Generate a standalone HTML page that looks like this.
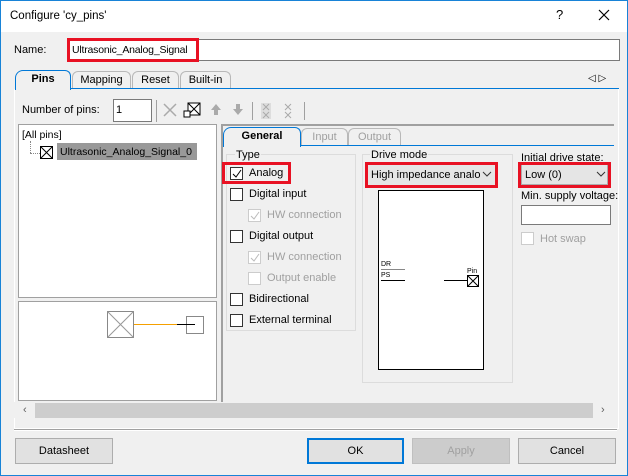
<!DOCTYPE html>
<html><head><meta charset="utf-8"><style>
*{box-sizing:border-box;margin:0;padding:0}
body{width:628px;height:476px;overflow:hidden;font-family:"Liberation Sans",sans-serif;font-size:11px;color:#000;background:#f0f0f0;position:relative}
.a{position:absolute}
.t{position:absolute;white-space:nowrap;line-height:14px}
.cb{position:absolute;width:13px;height:13px;border:1px solid #333;background:#fff}
.cbd{position:absolute;width:13px;height:13px;border:1px solid #ccc;background:#fff}
.red{position:absolute;border:3px solid #e81123}
.btn{position:absolute;height:26px;border:1px solid #adadad;background:#e1e1e1;text-align:center;line-height:24px}
.g{color:#a0a0a0}
.tab{position:absolute;height:18px;border:1px solid #b8b8b8;border-bottom:none;border-radius:6px 6px 0 0;background:#f0f0f0;text-align:center;line-height:17px}
</style></head><body>
<div class="a" style="left:0;top:0;width:628px;height:476px;border:1px solid #1883d7;border-top:none"></div>
<div class="a" style="left:0;top:0;width:628px;height:32px;background:#fff;border:1px solid #1883d7;border-bottom:none"></div>
<div class="t" style="left:10px;top:9px;font-size:11.5px">Configure 'cy_pins'</div>
<div class="t" style="left:556px;top:8px;font-size:13px">?</div>
<svg class="a" style="left:598px;top:9px" width="12" height="12"><path d="M1 1L11 11M11 1L1 11" stroke="#000" stroke-width="1.2"/></svg>

<div class="t" style="left:14px;top:43px">Name:</div>
<div class="a" style="left:68px;top:39px;width:552px;height:22px;background:#fff;border:1px solid #7a7a7a"></div>
<div class="t" style="left:72px;top:43px;font-size:10.5px;letter-spacing:-0.2px">Ultrasonic_Analog_Signal</div>
<div class="red" style="left:67px;top:38px;width:132px;height:24px"></div>

<div class="tab" style="left:72px;top:71px;width:59px">Mapping</div>
<div class="tab" style="left:132px;top:71px;width:47px">Reset</div>
<div class="tab" style="left:180px;top:71px;width:51px">Built-in</div>
<div class="a" style="left:15px;top:88px;width:604px;height:1px;background:#0078d7"></div>
<div class="tab" style="left:15px;top:70px;width:56px;height:20px;border-color:#0078d7;font-weight:bold;border-radius:8px 6px 0 0">Pins</div>
<div class="t" style="left:588px;top:72px;font-size:10px">◁ ▷</div>
<div class="a" style="left:14px;top:89px;width:605px;height:340px;border:1px solid #fff;border-top:none"></div>

<div class="t" style="left:22px;top:103px">Number of pins:</div>
<div class="a" style="left:113px;top:99px;width:39px;height:23px;background:#fff;border:1px solid #7a7a7a"></div>
<div class="t" style="left:116px;top:103px">1</div>
<div class="a" style="left:156px;top:100px;width:1px;height:22px;background:#a0a0a0"></div>
<svg class="a" style="left:163px;top:102px" width="150" height="18">
<path d="M1 2L13 14M13 2L1 14" stroke="#aaa" stroke-width="1.5"/>
<rect x="25" y="1" width="12" height="12" fill="#fff" stroke="#000"/><path d="M25 1L37 13M37 1L25 13" stroke="#000"/>
<rect x="21" y="9" width="6" height="6" fill="#fff" stroke="#000"/>
<path d="M53 2L48 8H51V13H55V8H58Z" fill="#aaa"/><path d="M75 13L70 7H73V2H77V7H80Z" fill="#aaa"/>
<rect x="89" y="-2" width="1" height="22" fill="#a0a0a0"/>
<rect x="98" y="1" width="10" height="16" fill="#ddd"/><path d="M100 2L106 8M106 2L100 8M100 10L106 16M106 10L100 16" stroke="#aaa"/>
<path d="M122 2L128 8M128 2L122 8M122 10L128 16M128 10L122 16" stroke="#aaa"/>
<rect x="141" y="-2" width="1" height="22" fill="#a0a0a0"/></svg>

<div class="a" style="left:18px;top:124px;width:199px;height:174px;background:#fff;border:1px solid #a0a0a0"></div>
<div class="t" style="left:22px;top:128px;font-size:10.5px">[All pins]</div>
<div class="a" style="left:30px;top:141px;width:1px;height:12px;border-left:1px dotted #888"></div>
<div class="a" style="left:30px;top:153px;width:10px;height:1px;border-top:1px dotted #888"></div>
<svg class="a" style="left:40px;top:146px" width="13" height="13"><rect x=".5" y=".5" width="12" height="12" fill="#fff" stroke="#000"/><path d="M.5 .5L12.5 12.5M12.5 .5L.5 12.5" stroke="#000"/></svg>
<div class="a" style="left:57px;top:143px;width:140px;height:17px;background:#999"></div>
<div class="t" style="left:60px;top:145px;font-size:10.5px">Ultrasonic_Analog_Signal_0</div>

<div class="a" style="left:18px;top:301px;width:199px;height:100px;background:#fff;border:1px solid #a0a0a0"></div>
<svg class="a" style="left:100px;top:305px" width="110" height="40">
<rect x="7.5" y="6.5" width="26" height="26" fill="#fff" stroke="#888"/><path d="M7.5 6.5L33.5 32.5M33.5 6.5L7.5 32.5" stroke="#999"/>
<path d="M34 19.5H77" stroke="#f5a000"/><rect x="86.5" y="11.5" width="17" height="17" fill="#fff" stroke="#888"/><path d="M77 19.5H95" stroke="#000"/></svg>

<div class="a" style="left:221px;top:124px;width:393px;height:278px;border-left:2px solid #a0a0a0;border-top:2px solid #a0a0a0"></div>
<div class="tab" style="left:301px;top:128px;width:47px" ><span class="g">Input</span></div>
<div class="tab" style="left:348px;top:128px;width:53px"><span class="g">Output</span></div>
<div class="a" style="left:223px;top:145px;width:391px;height:1px;background:#0078d7"></div>
<div class="tab" style="left:223px;top:127px;width:78px;height:20px;border-color:#0078d7;font-weight:bold;border-radius:8px 6px 0 0">General</div>

<div class="a" style="left:226px;top:154px;width:130px;height:177px;border:1px solid #dcdcdc"></div>
<div class="t" style="left:235px;top:148px;background:#f0f0f0;padding:0 1px">Type</div>
<div class="cb" style="left:230px;top:167px"></div><svg class="a" style="left:231px;top:168px" width="12" height="12"><path d="M2 6L5 9L10 2" stroke="#000" fill="none"/></svg>
<div class="t" style="left:249px;top:166px">Analog</div>
<div class="red" style="left:222px;top:162px;width:69px;height:22px"></div>
<div class="cb" style="left:230px;top:188px"></div><div class="t" style="left:249px;top:187px">Digital input</div>
<div class="cbd" style="left:248px;top:209px"></div><svg class="a" style="left:249px;top:210px" width="12" height="12"><path d="M2 6L5 9L10 2" stroke="#bbb" fill="none"/></svg><div class="t g" style="left:267px;top:208px">HW connection</div>
<div class="cb" style="left:230px;top:230px"></div><div class="t" style="left:249px;top:229px">Digital output</div>
<div class="cbd" style="left:248px;top:251px"></div><svg class="a" style="left:249px;top:252px" width="12" height="12"><path d="M2 6L5 9L10 2" stroke="#bbb" fill="none"/></svg><div class="t g" style="left:267px;top:250px">HW connection</div>
<div class="cbd" style="left:248px;top:272px"></div><div class="t g" style="left:267px;top:271px">Output enable</div>
<div class="cb" style="left:230px;top:293px"></div><div class="t" style="left:249px;top:292px">Bidirectional</div>
<div class="cb" style="left:230px;top:314px"></div><div class="t" style="left:249px;top:313px">External terminal</div>

<div class="a" style="left:362px;top:154px;width:151px;height:229px;border:1px solid #dcdcdc"></div>
<div class="t" style="left:370px;top:148px;background:#f0f0f0;padding:0 1px">Drive mode</div>
<div class="a" style="left:366px;top:163px;width:130px;height:23px;background:#e5e5e5;border:1px solid #adadad"></div>
<div class="t" style="left:371px;top:168px">High impedance analo</div>
<svg class="a" style="left:482px;top:171px" width="10" height="6"><path d="M1 1L5 5L9 1" stroke="#333" fill="none"/></svg>
<div class="red" style="left:365px;top:162px;width:133px;height:26px"></div>
<div class="a" style="left:378px;top:190px;width:106px;height:180px;background:#fff;border:1px solid #000"></div>
<div class="t" style="left:381px;top:261px;font-size:7px;line-height:7px">DR</div>
<div class="a" style="left:381px;top:269px;width:24px;height:1px;background:#888"></div>
<div class="t" style="left:381px;top:272px;font-size:7px;line-height:7px">PS</div>
<div class="a" style="left:381px;top:280px;width:24px;height:1px;background:#000"></div>
<div class="t" style="left:467px;top:268px;font-size:7px;line-height:7px">Pin</div>
<div class="a" style="left:444px;top:280px;width:24px;height:1px;background:#000"></div>
<svg class="a" style="left:467px;top:275px" width="12" height="12"><rect x=".5" y=".5" width="11" height="11" fill="#fff" stroke="#000"/><path d="M.5 .5L11.5 11.5M11.5 .5L.5 11.5" stroke="#000"/></svg>

<div class="t" style="left:521px;top:151px">Initial drive state:</div>
<div class="a" style="left:521px;top:164px;width:87px;height:21px;background:#e5e5e5;border:1px solid #adadad"></div>
<div class="t" style="left:525px;top:168px">Low (0)</div>
<svg class="a" style="left:596px;top:171px" width="10" height="6"><path d="M1 1L5 5L9 1" stroke="#333" fill="none"/></svg>
<div class="red" style="left:518px;top:162px;width:93px;height:26px"></div>
<div class="t" style="left:521px;top:189px">Min. supply voltage:</div>
<div class="a" style="left:521px;top:205px;width:90px;height:20px;background:#fff;border:1px solid #7a7a7a"></div>
<div class="cbd" style="left:521px;top:232px"></div><div class="t g" style="left:540px;top:232px">Hot swap</div>

<div class="a" style="left:14px;top:402px;width:599px;height:16px;background:#f0f0f0"></div>
<div class="a" style="left:35px;top:403px;width:558px;height:15px;background:#cdcdcd"></div>
<div class="t" style="left:23px;top:403px;color:#606060;font-size:11px">‹</div>
<div class="t" style="left:601px;top:403px;color:#606060;font-size:11px">›</div>
<div class="a" style="left:14px;top:429px;width:603px;height:1px;background:#a0a0a0"></div>
<div class="a" style="left:14px;top:430px;width:603px;height:1px;background:#fff"></div>

<div class="btn" style="left:15px;top:438px;width:98px">Datasheet</div>
<div class="btn" style="left:307px;top:438px;width:97px;border:2px solid #0078d7;line-height:22px">OK</div>
<div class="btn g" style="left:412px;top:438px;width:98px;background:#ccc;border-color:#bfbfbf">Apply</div>
<div class="btn" style="left:518px;top:438px;width:98px">Cancel</div>
</body></html>
